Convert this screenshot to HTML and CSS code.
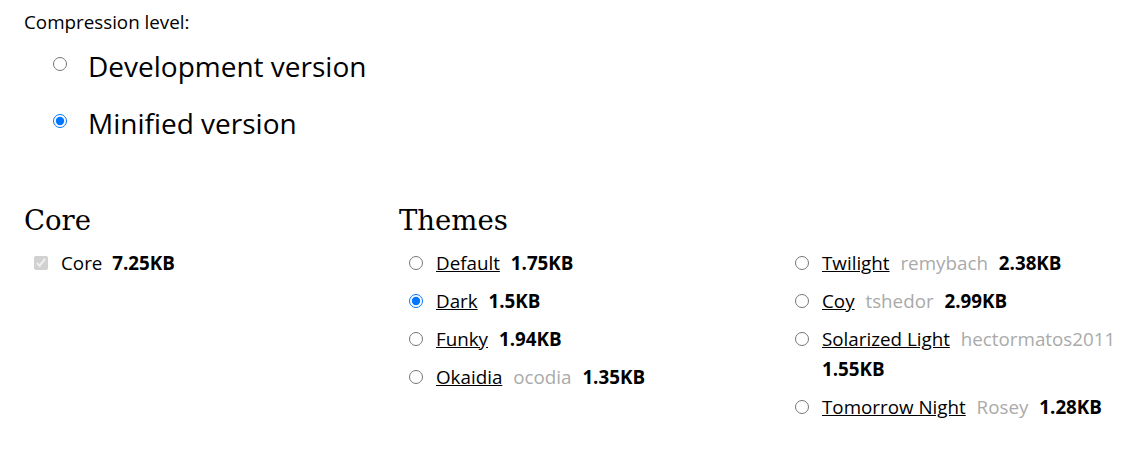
FILE: index.html
```html
<!DOCTYPE html>
<html lang="en">
<head>
<meta charset="utf-8">
<title>Download Prism</title>
<link rel="stylesheet" href="styles.css">
</head>
<body>
<main class="page">
  <section class="compression">
    <p class="field-label">Compression level:</p>
    <label class="big-option"><input type="radio" name="compression" value="dev"><span>Development version</span></label>
    <label class="big-option"><input type="radio" name="compression" value="min" checked><span>Minified version</span></label>
  </section>

  <div class="categories">
    <section class="options core">
      <h1 class="options-title">Core</h1>
      <div class="opt-list">
        <label class="opt"><input type="checkbox" checked disabled><span class="opt-text"><span class="name">Core</span> <strong>7.25KB</strong></span></label>
      </div>
    </section>

    <section class="options themes">
      <h1 class="options-title">Themes</h1>
      <div class="theme-grid">
        <div class="opt-list">
          <label class="opt"><input type="radio" name="theme"><span class="opt-text"><a href="#">Default</a> <strong>1.75KB</strong></span></label>
          <label class="opt"><input type="radio" name="theme" checked><span class="opt-text"><a href="#">Dark</a> <strong>1.5KB</strong></span></label>
          <label class="opt"><input type="radio" name="theme"><span class="opt-text"><a href="#">Funky</a> <strong>1.94KB</strong></span></label>
          <label class="opt"><input type="radio" name="theme"><span class="opt-text"><a href="#">Okaidia</a> <span class="owner">ocodia</span> <strong>1.35KB</strong></span></label>
        </div>
        <div class="opt-list">
          <label class="opt"><input type="radio" name="theme"><span class="opt-text"><a href="#">Twilight</a> <span class="owner">remybach</span> <strong>2.38KB</strong></span></label>
          <label class="opt"><input type="radio" name="theme"><span class="opt-text"><a href="#">Coy</a> <span class="owner">tshedor</span> <strong>2.99KB</strong></span></label>
          <label class="opt"><input type="radio" name="theme"><span class="opt-text"><a href="#">Solarized Light</a> <span class="owner">hectormatos2011</span> <strong>1.55KB</strong></span></label>
          <label class="opt"><input type="radio" name="theme"><span class="opt-text"><a href="#">Tomorrow Night</a> <span class="owner">Rosey</span> <strong>1.28KB</strong></span></label>
        </div>
      </div>
    </section>
  </div>
</main>
</body>
</html>
```
FILE: styles.css
```css
html, body {
  margin: 0;
  padding: 0;
  background: #fff;
}

body {
  font-family: "Open Sans", "Noto Sans", sans-serif;
  font-size: 18.8px;
  color: #000;
}

.page {
  padding: 8px 14px 0 24px;
}

.field-label {
  margin: 0;
  line-height: 28px;
}

.compression {
  display: flex;
  flex-direction: column;
}

.big-option {
  display: flex;
  align-items: center;
  height: 57px;
  padding-left: 29px;
  font-size: 28px;
}

.big-option:first-of-type {
  margin-top: 1px;
}

.big-option input {
  margin: 0 21px 0 0;
  width: 14px;
  height: 14px;
  position: relative;
  top: -2px;
}

.categories {
  display: grid;
  grid-template-columns: 375px 1fr;
  margin-top: 53px;
}

.options-title {
  margin: 0 0 12px;
  font-family: "DejaVu Serif", serif;
  font-weight: normal;
  font-size: 27.5px;
  line-height: 32px;
}

.theme-grid {
  display: grid;
  grid-template-columns: 386px 1fr;
}

.opt-list {
  display: flex;
  flex-direction: column;
  gap: 8px;
}

.opt {
  display: flex;
  align-items: flex-start;
  padding-left: 10px;
  line-height: 30px;
}

.opt input {
  flex: none;
  width: 14px;
  height: 14px;
  margin: 8px 13px 0 0;
}

.opt-text a {
  color: #000;
  text-decoration: underline;
  margin-right: 6px;
}

.opt-text .name {
  margin-right: 5px;
}

.owner {
  color: #aaa;
  margin-right: 6px;
}

strong {
  font-weight: bold;
}
```
